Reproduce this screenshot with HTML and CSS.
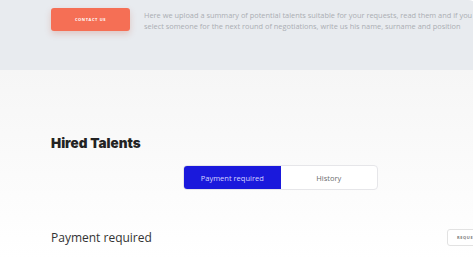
FILE: index.html
```html
<!DOCTYPE html>
<html lang="en">
<head>
  <meta charset="UTF-8" />
  <meta name="viewport" content="width=device-width, initial-scale=1.0"/>
  <title>Hired Talents</title>
  <link rel="stylesheet" href="styles.css">
</head>
<body>

  <!-- Intro panel -->
  <div class="intro">
    <button class="contact-btn">Contact us</button>
    <p class="intro-text">Here we upload a summary of potential talents suitable for your requests, read them and if you want to select someone for the next round of negotiations, write us his name, surname and position</p>
  </div>

  <!-- Talents -->
  <div class="main">
    <h2>Hired Talents</h2>

    <div class="tabs">
      <div class="tab active">Payment required</div>
      <div class="tab">History</div>
    </div>

    <div class="section-head">
      <h3>Payment required</h3>
      <button class="request-btn">Request</button>
    </div>
  </div>

</body>
</html>
```

FILE: styles.css
```css
* {
  margin: 0; padding: 0;
  box-sizing: border-box;
}

body, html {
  height: 100%;
  font-family: 'Open Sans', sans-serif;
  background: #fff;
  color: #333;
  overflow: hidden;
}

.intro {
  height: 70px;
  background: #e8ebef;
  border-top-right-radius: 10px;
  display: flex;
  align-items: flex-start;
  gap: 14px;
  padding: 8px 0 0 51px;
  width: 478px;
}

.contact-btn {
  flex-shrink: 0;
  width: 79px;
  height: 23px;
  background: #f56f55;
  color: #fff;
  border: none;
  border-radius: 3px;
  box-shadow: 0 3px 6px rgba(200, 90, 70, 0.25);
  font-family: 'Open Sans', sans-serif;
  font-size: 4px;
  font-weight: 700;
  letter-spacing: 0.6px;
  text-transform: uppercase;
}

.intro-text {
  flex-shrink: 0;
  width: 368px;
  font-size: 7.4px;
  line-height: 11px;
  color: #abaeb3;
  padding-top: 2px;
}

.main {
  background: linear-gradient(#f6f6f6, #fff);
  height: 189px;
  padding: 65px 0 0 51px;
}

h2 {
  font-family: 'Inter', sans-serif;
  font-size: 13.5px;
  font-weight: 900;
  color: #232323;
  line-height: 16px;
}

.tabs {
  display: flex;
  width: 195px;
  height: 25px;
  margin: 14px 0 0 132px;
  border: 1px solid #e6e6e9;
  border-radius: 4px;
  background: #fff;
  overflow: hidden;
}

.tab {
  flex: 1;
  display: flex;
  align-items: center;
  justify-content: center;
  font-size: 7.5px;
  color: #6c6c70;
}

.tab.active {
  background: #1a19dc;
  color: #d4d4ff;
}

.section-head {
  display: flex;
  align-items: center;
  margin-top: 39px;
  width: 480px;
}

h3 {
  width: 396px;
  flex-shrink: 0;
  font-size: 12px;
  font-weight: 400;
  color: #333;
}

.request-btn {
  flex-shrink: 0;
  height: 17px;
  padding: 0 9px;
  background: #fff;
  border: 1px solid #e2e2e2;
  border-radius: 3px;
  font-family: 'Open Sans', sans-serif;
  font-size: 4px;
  font-weight: 700;
  letter-spacing: 0.6px;
  color: #777;
  text-transform: uppercase;
}
```
